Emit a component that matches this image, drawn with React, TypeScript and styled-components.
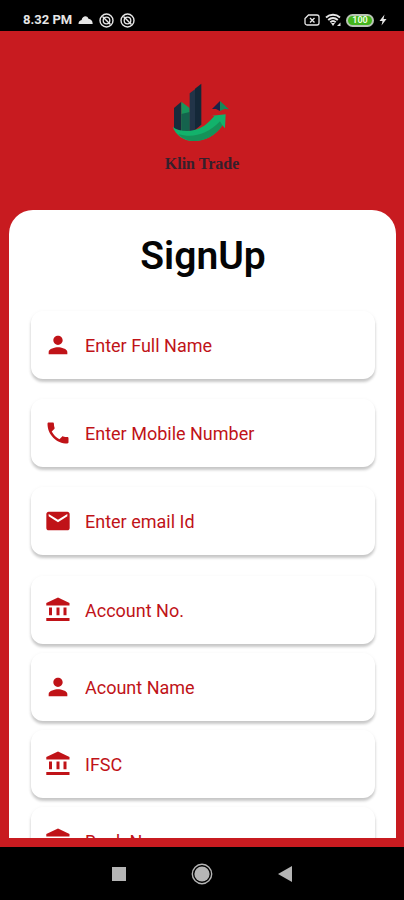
import React from "react";
import styled, { createGlobalStyle } from "styled-components";
import { MdEmail, MdPerson, MdPhone } from "react-icons/md";

const RED = "#c81b20";
const INK = "#c01318";

const GlobalStyle = createGlobalStyle`
  *, *::before, *::after { box-sizing: border-box; }
  body { margin: 0; background: ${RED}; font-family: Roboto, sans-serif; }
  svg { display: block; flex-shrink: 0; }
`;

const Screen = styled.div`
  display: flex;
  flex-direction: column;
  height: 100vh;
  background: ${RED};
`;

const StatusBar = styled.header`
  display: flex;
  align-items: center;
  justify-content: space-between;
  height: 31px;
  padding: 9px 17px 0 23px;
  background: #000;
  color: #e6e6e6;
`;

const StatusGroup = styled.div<{ $gap: number }>`
  display: flex;
  align-items: center;
  gap: ${({ $gap }) => $gap}px;
`;

const Clock = styled.time`
  font-size: 13px;
  line-height: 16px;
  font-weight: 700;
`;

const Battery = styled.span`
  width: 28px;
  height: 13px;
  border: 2px solid #b9c4b5;
  border-radius: 7px;
  background: #43b51c;
  color: #e9ffdf;
  font-size: 9px;
  line-height: 9px;
  font-weight: 700;
  text-align: center;
`;

const Brand = styled.div`
  display: flex;
  flex-direction: column;
  align-items: center;
  gap: 11px;
  height: 179px;
  padding-top: 52px;
`;

const BrandName = styled.div`
  color: #35202c;
  font-family: "Liberation Serif", serif;
  font-size: 16px;
  line-height: 20px;
  font-weight: 700;
`;

const Card = styled.main`
  flex: 1;
  min-height: 0;
  margin: 0 8px 9px 9px;
  padding: 22px 21px 0 22px;
  border-radius: 24px 24px 0 0;
  background: #fff;
  overflow: hidden;
`;

const Title = styled.h1`
  margin: 0 0 31px;
  font-size: 39px;
  line-height: 48px;
  font-weight: 600;
  text-align: center;
  color: #050505;
`;

const Form = styled.form`
  display: flex;
  flex-direction: column;
  gap: 21px;
`;

const FieldGroup = styled.div<{ $gap: number }>`
  display: flex;
  flex-direction: column;
  gap: ${({ $gap }) => $gap}px;
`;

const Field = styled.label`
  display: flex;
  align-items: center;
  gap: 13px;
  height: 68px;
  padding: 0 13px;
  border-radius: 12px;
  background: #fff;
  color: ${INK};
  box-shadow: 0 3px 3px rgba(0, 0, 0, 0.2), 0 1px 4px rgba(0, 0, 0, 0.05);
`;

const Input = styled.input`
  flex: 1;
  min-width: 0;
  padding: 2px 0 0;
  border: 0;
  outline: 0;
  background: transparent;
  color: ${INK};
  font-family: Roboto, sans-serif;
  font-size: 18px;
  line-height: 24px;

  &::placeholder {
    color: ${INK};
    opacity: 1;
  }
`;

const NavBar = styled.nav`
  display: grid;
  grid-template-columns: repeat(3, 83px);
  justify-content: center;
  align-items: center;
  height: 53px;
  background: #000;
`;

const NavButton = styled.button`
  display: flex;
  justify-content: center;
  padding: 0;
  border: 0;
  background: none;
  color: #b5b5b5;
`;

const BankIcon = () => (
  <svg width="28" height="28" viewBox="0 0 28 28" fill="currentColor" aria-hidden="true">
    <path d="M14 1.500 25.500 7V9.500H2.300V7Z" />
    <path d="M5 11.500h3V19.300H5zM12.500 11.500h3V19.300h-3zM19.500 11.500h3V19.300h-3zM2.300 22h23.200v3H2.300z" />
  </svg>
);

const CloudIcon = () => (
  <svg width="15" height="14" viewBox="0 0 15 14" fill="currentColor" aria-hidden="true">
    <path d="M.5 11C.3 8.700 2 7.300 3.600 7 4.500 2.800 9 2 10.500 5.700c2.300.2 4.200 2 4.200 5.300Z" />
  </svg>
);

const MutedIcon = () => (
  <svg width="15" height="15" viewBox="0 0 15 15" fill="none" stroke="currentColor" aria-hidden="true">
    <circle cx="7.500" cy="7.500" r="6.500" strokeWidth="1.400" />
    <circle cx="7.500" cy="7.500" r="3.300" strokeWidth="1.300" />
    <path d="m3.500 3.500 8 8" strokeWidth="1.500" />
  </svg>
);

const SimIcon = () => (
  <svg width="16" height="12" viewBox="0 0 16 12" fill="none" stroke="currentColor" aria-hidden="true">
    <path d="M4.500 1H13a2 2 0 0 1 2 2v6a2 2 0 0 1-2 2H3a2 2 0 0 1-2-2V4.500Z" strokeWidth="1.300" />
    <path d="m6 4 4.500 4.500M10.500 4 6 8.500" strokeWidth="1.400" />
  </svg>
);

const WifiIcon = () => (
  <svg width="16" height="14" viewBox="0 0 16 14" fill="none" stroke="currentColor" aria-hidden="true">
    <path d="M1 4.500c4-3.600 10-3.600 14 0M3.200 7c3-2.600 6.600-2.600 9.600 0M5.300 9.300c1.600-1.500 3.800-1.500 5.400 0" strokeWidth="1.900" />
    <path d="m6 10 2 3 2-3Z" fill="currentColor" stroke="none" />
    <path d="M15.500 9.500V13H12Z" fill="currentColor" stroke="none" />
  </svg>
);

const BoltIcon = () => (
  <svg width="8" height="12" viewBox="0 0 8 12" fill="currentColor" aria-hidden="true">
    <path d="M5.500.500.500 7h3L2.500 11.500 7.500 5h-3Z" />
  </svg>
);

const LogoMark = () => (
  <svg width="64" height="60" viewBox="61 41 192 180" role="img" aria-label="Klin Trade">
    <path d="M73 116 95 97v88H84L73 178Z" fill="#192b3c" />
    <path d="M95 97 120 116v68l-25 3Z" fill="#18955c" />
    <path d="M95 134 120 128v56l-25 3Z" fill="#15634d" />
    <path d="M120 72 136 60V184l-16 2Z" fill="#223448" />
    <path d="M136 58 155 43V166l-19 16Z" fill="#142838" />
    <path d="M69 172C92 191 140 190 170 164 181 155 188 147 194 141L187 139 228 135 226 177 218 168C198 200 164 216 130 215 101 214 78 197 69 172Z" fill="#12b26b" />
    <path d="M86 194C125 206 171 199 211 156L218 168C198 200 164 216 130 215 111 214 97 206 86 194Z" fill="#159259" />
    <path d="M187 119 211 95V125L199 119Z" fill="#1b2348" />
    <path d="M211 95 238 120 224 119 211 125Z" fill="#168859" />
  </svg>
);

const personalFields = [
  { id: "fullName", hint: "Enter Full Name", type: "text", icon: <MdPerson size={28} /> },
  { id: "mobile", hint: "Enter Mobile Number", type: "tel", icon: <MdPhone size={28} /> },
  { id: "email", hint: "Enter email Id", type: "email", icon: <MdEmail size={28} /> },
];

const bankFields = [
  { id: "accountNo", hint: "Account No.", type: "text", icon: <BankIcon /> },
  { id: "accountName", hint: "Acount Name", type: "text", icon: <MdPerson size={28} /> },
  { id: "ifsc", hint: "IFSC", type: "text", icon: <BankIcon /> },
  { id: "bankName", hint: "Bank Name", type: "text", icon: <BankIcon /> },
];

const renderField = (f: (typeof bankFields)[number]) => (
  <Field key={f.id} htmlFor={f.id}>
    {f.icon}
    <Input id={f.id} name={f.id} type={f.type} placeholder={f.hint} aria-label={f.hint} />
  </Field>
);

export default function App() {
  return (
    <>
      <GlobalStyle />
      <Screen>
        <StatusBar>
          <StatusGroup $gap={6}>
            <Clock>8.32 PM</Clock>
            <CloudIcon />
            <MutedIcon />
            <MutedIcon />
          </StatusGroup>
          <StatusGroup $gap={5}>
            <SimIcon />
            <WifiIcon />
            <Battery>100</Battery>
            <BoltIcon />
          </StatusGroup>
        </StatusBar>
        <Brand>
          <LogoMark />
          <BrandName>Klin Trade</BrandName>
        </Brand>
        <Card>
          <Title>SignUp</Title>
          <Form>
            <FieldGroup $gap={20}>{personalFields.map(renderField)}</FieldGroup>
            <FieldGroup $gap={9}>{bankFields.map(renderField)}</FieldGroup>
          </Form>
        </Card>
        <NavBar aria-label="System">
          <NavButton type="button" aria-label="Recent apps">
            <svg width="14" height="14" viewBox="0 0 14 14" fill="currentColor">
              <path d="M0 0h14v14H0z" />
            </svg>
          </NavButton>
          <NavButton type="button" aria-label="Home">
            <svg width="22" height="22" viewBox="0 0 22 22">
              <circle cx="11" cy="11" r="9.700" fill="none" stroke="currentColor" strokeWidth="1.400" />
              <circle cx="11" cy="11" r="7.600" fill="currentColor" />
            </svg>
          </NavButton>
          <NavButton type="button" aria-label="Back">
            <svg width="14" height="16" viewBox="0 0 14 16" fill="currentColor">
              <path d="M14 0v16L0 8Z" />
            </svg>
          </NavButton>
        </NavBar>
      </Screen>
    </>
  );
}
